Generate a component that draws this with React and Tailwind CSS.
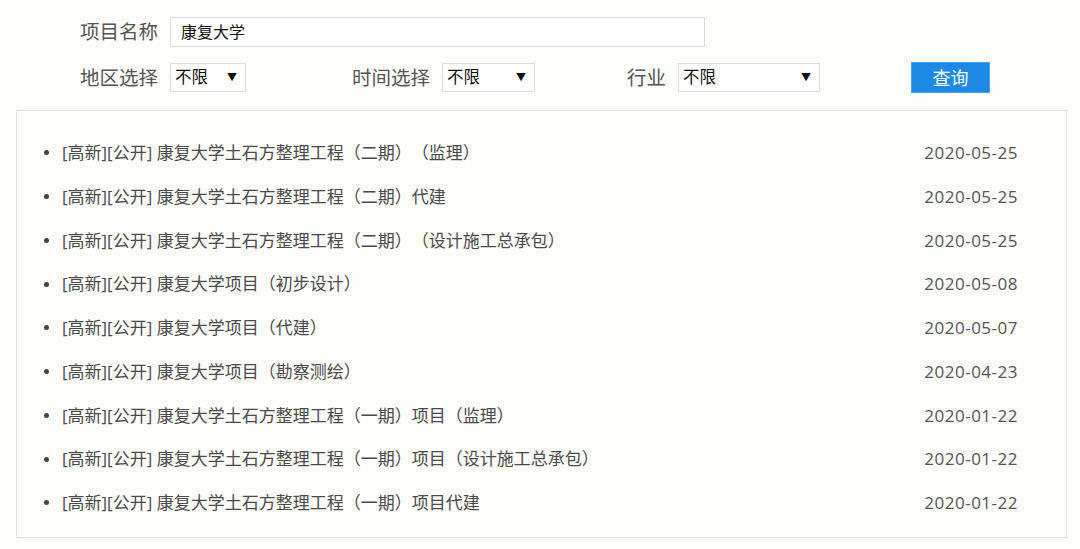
const items = [
    { title: '[高新][公开] 康复大学土石方整理工程（二期）（监理）', date: '2020-05-25' },
    { title: '[高新][公开] 康复大学土石方整理工程（二期）代建', date: '2020-05-25' },
    { title: '[高新][公开] 康复大学土石方整理工程（二期）（设计施工总承包）', date: '2020-05-25' },
    { title: '[高新][公开] 康复大学项目（初步设计）', date: '2020-05-08' },
    { title: '[高新][公开] 康复大学项目（代建）', date: '2020-05-07' },
    { title: '[高新][公开] 康复大学项目（勘察测绘）', date: '2020-04-23' },
    { title: '[高新][公开] 康复大学土石方整理工程（一期）项目（监理）', date: '2020-01-22' },
    { title: '[高新][公开] 康复大学土石方整理工程（一期）项目（设计施工总承包）', date: '2020-01-22' },
    { title: '[高新][公开] 康复大学土石方整理工程（一期）项目代建', date: '2020-01-22' },
]

const Select = ({ width }) => (
    <div className={`${width} h-[29px] bg-white border border-[#dcdcdc] flex items-center justify-between pl-[4px] pr-[8px]`}>
        <span className="text-[16.5px] text-[#111]">不限</span>
        <span className="text-[10px] text-[#111]">▼</span>
    </div>
)

const App = () => {
    return (
        <div className="min-h-screen bg-[#fdfdfa] pt-[17px] font-['Open_Sans','Noto_Sans_CJK_SC',sans-serif] [text-spacing-trim:space-all]">
            {/* Filtros */}
            <div className="pl-[80px]">
                <div className="flex items-center h-[30px]">
                    <span className="w-[90px] text-[19.5px] text-[#555] leading-none">项目名称</span>
                    <div className="w-[535px] h-[30px] bg-white border border-[#dcdcdc] flex items-center pl-[10px]">
                        <span className="text-[16px] text-[#111]">康复大学</span>
                    </div>
                </div>
                <div className="flex items-center h-[31px] mt-[15px]">
                    <span className="w-[90px] text-[19.5px] text-[#555] leading-none">地区选择</span>
                    <Select width="w-[76px]" />
                    <span className="ml-[106px] w-[90px] text-[19.5px] text-[#555] leading-none">时间选择</span>
                    <Select width="w-[93px]" />
                    <span className="ml-[92px] w-[51px] text-[19.5px] text-[#555] leading-none">行业</span>
                    <Select width="w-[142px]" />
                    <button className="ml-[91px] w-[79px] h-[31px] bg-[#1e88e5] border border-[#4aa3ee] text-white text-[18px] leading-none">
                        查询
                    </button>
                </div>
            </div>

            {/* Lista */}
            <div className="ml-[16px] mt-[17px] w-[1051px] h-[428px] border border-[#e2e2e0] pt-[20px] pl-[27px] pr-[48px]">
                {items.map((item, idx) => (
                    <div key={idx} className="flex items-center justify-between h-[43.75px]">
                        <div className="flex items-center">
                            <span className="w-[5px] h-[5px] rounded-full bg-[#444] mr-[13px]"></span>
                            <span className="text-[17px] text-[#4a4a4a]">{item.title}</span>
                        </div>
                        <span className="text-[17px] text-[#555] tracking-[0.5px]">{item.date}</span>
                    </div>
                ))}
            </div>
        </div>
    )
}

export default App
